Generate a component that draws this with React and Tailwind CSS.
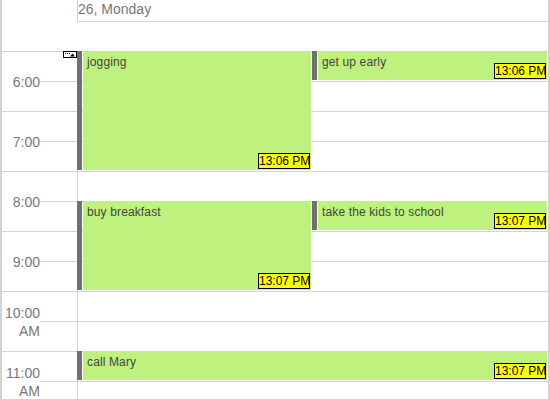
const hourList = ["6:00", "7:00", "8:00", "9:00", "10:00 AM", "11:00 AM"];

function Ev({ pos, text, time }) {
  return (
    <div className={`absolute flex gap-px ${pos}`}>
      <div className="w-[5px] shrink-0 bg-[#707070]" />
      <div className="relative flex-1 bg-[#bef17e] pl-1 pt-0.5 text-[12px] leading-[18px] tracking-[0.13px] text-[#444444]">
        {text}
        <span className="absolute bottom-px right-px h-4 w-[52px] whitespace-nowrap border border-black bg-[#ffff00] text-[12px] leading-[14px] tracking-normal text-black">
          {time}
        </span>
      </div>
    </div>
  );
}

export default function App() {
  return (
    <div className="flex h-[400px] w-[550px] flex-col overflow-hidden border-x-2 border-b border-[#d3d3d3] bg-white font-['Liberation_Sans',Arial,sans-serif]">
      <div className="h-[52px] shrink-0 border-b border-[#d3d3d3] pl-[75px]">
        <div className="h-[22px] border-b border-l border-[#d3d3d3] text-[14px] leading-[18px] text-[#777777]">26, Monday</div>
      </div>
      <div className="flex">
        <div className="relative w-[75px] shrink-0">
          <svg className="absolute -top-px right-0 h-[7px] w-[14px]" viewBox="0 0 14 7">
            <rect x="0.5" y="0.5" width="13" height="6" fill="#fff" stroke="#000" />
            <path d="M2 2.5h1M4 2.5h1M6 2.5h1" stroke="#000" />
            <path d="M7 5.5h5L9.5 2.5z" fill="#000" />
          </svg>
          {hourList.map((h, i) => (
            <div key={i} className="flex h-[60px]">
              <div className="flex w-[38px] shrink-0 items-center justify-end border-b border-[#d3d3d3] text-right text-[14px] leading-[18px] text-[#777777]">
                {h}
              </div>
              <div className="flex-1">
                <div className="h-[30px] border-b border-[#d3d3d3]" />
                <div className="h-[30px] border-b border-[#d3d3d3]" />
              </div>
            </div>
          ))}
        </div>
        <div className="relative flex-1 border-l border-[#d3d3d3]">
          {[...Array(12)].map((_, i) => (
            <div key={i} className="h-[30px] border-b border-[#d3d3d3]" />
          ))}
          <Ev pos="-left-px top-[-1px] h-[119px] w-[234px]" text="jogging" time="13:06 PM" />
          <Ev pos="left-[234px] top-[-1px] h-[29px] w-[235px]" text="get up early" time="13:06 PM" />
          <Ev pos="-left-px top-[149px] h-[89px] w-[234px]" text="buy breakfast" time="13:07 PM" />
          <Ev pos="left-[234px] top-[149px] h-[29px] w-[235px]" text="take the kids to school" time="13:07 PM" />
          <Ev pos="-left-px top-[299px] h-[29px] w-[470px]" text="call Mary" time="13:07 PM" />
        </div>
      </div>
    </div>
  );
}
